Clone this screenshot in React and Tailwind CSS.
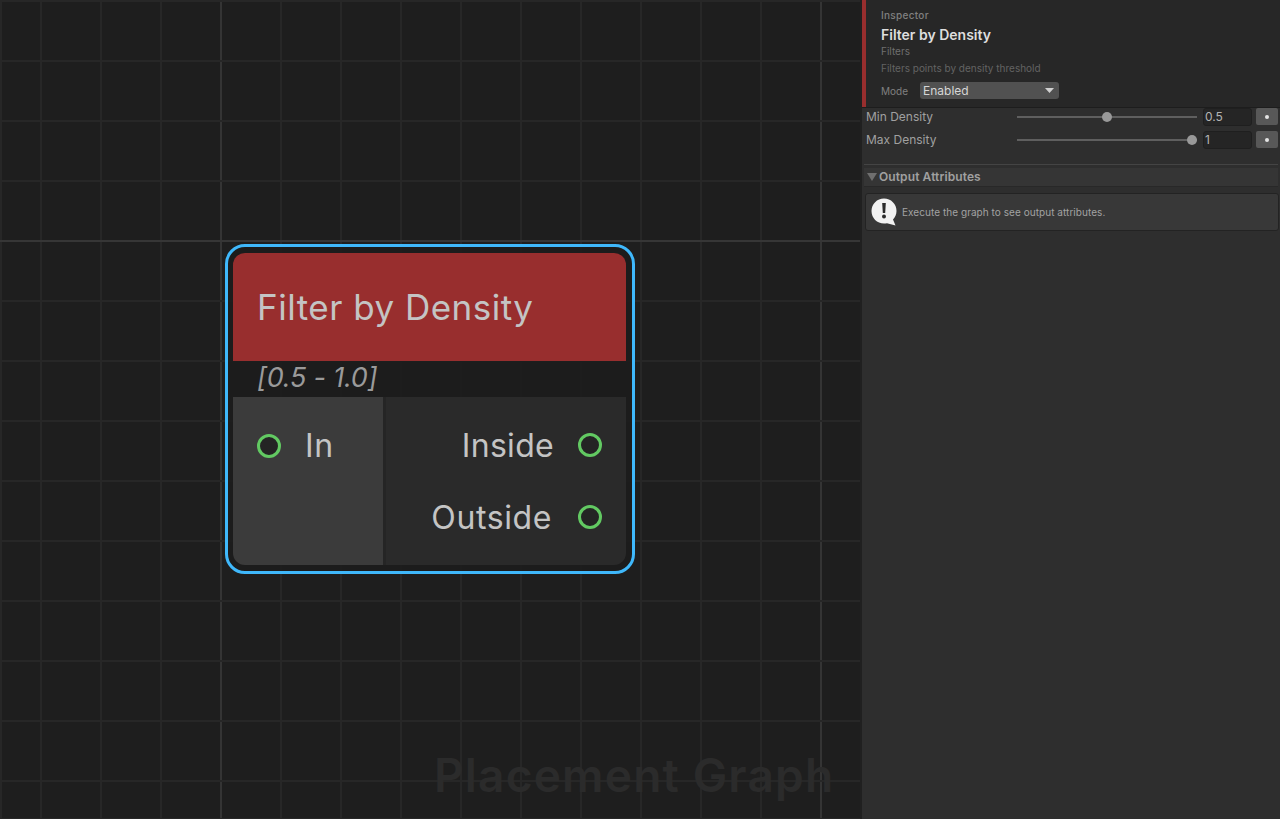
const INTER = "font-['Inter','Noto_Sans',sans-serif]";

function Grid() {
  const xs = [0, 40, 100, 160, 220, 280, 340, 400, 460, 520, 580, 640, 700, 760, 820];
  const ys = [0, 60, 120, 180, 240, 300, 360, 420, 480, 540, 600, 660, 720, 780, 818];
  return (
    <svg className="absolute inset-0" width="860" height="819">
      {xs.map((x) => (
        <line key={x} x1={x + 1} y1="0" x2={x + 1} y2="819" strokeWidth="2" stroke={x === 220 || x === 820 ? "#343434" : "#272727"} />
      ))}
      {ys.map((y) => (
        <line key={y} x1="0" y1={y + 1} x2="860" y2={y + 1} strokeWidth="2" stroke={y === 240 ? "#363636" : "#272727"} />
      ))}
    </svg>
  );
}

function Port() {
  return <div className="w-6 h-6 rounded-full border-[3px] border-[#62c962] bg-[#242424] shrink-0" />;
}

function GraphNode() {
  return (
    <div className="absolute left-[225px] top-[244px] w-[410px] h-[330px] rounded-[20px] border-[3px] border-[#3fb8fb] bg-[#1b1b1b]/80 pl-[5px] pr-[6px] py-[6px]">
      <div className="h-full rounded-[12px] overflow-hidden flex flex-col">
        <div className="h-[108px] bg-[#982e2e] flex items-center pl-[24px] text-[35px] text-[#c4c4c4] tracking-[0.5px]">
          Filter by Density
        </div>
        <div className="h-[36px] pl-[24px] pb-[2px] flex items-center italic text-[27px] tracking-[-0.2px] text-[#9a9a9a]">
          [0.5 - 1.0]
        </div>
        <div className="flex-1 flex text-[32px] tracking-[0.6px] text-[#c4c4c4]">
          <div className="w-[150px] bg-[#505050]/60 pt-[36px] pl-[24px]">
            <div className="flex items-center gap-[24px] h-[24px] pt-[1px]">
              <Port />
              <span>In</span>
            </div>
          </div>
          <div className="w-[3px] bg-[#2b2b2b]/60" />
          <div className="flex-1 bg-[#333333]/60 pt-[36px] pr-[24px] flex flex-col items-end gap-[48px]">
            <div className="flex items-center gap-[24px] h-[24px]">
              <span className="pt-[2px] tracking-[0.3px]">Inside</span>
              <Port />
            </div>
            <div className="flex items-center gap-[26px] h-[24px]">
              <span className="pt-[2px]">Outside</span>
              <Port />
            </div>
          </div>
        </div>
      </div>
    </div>
  );
}

function Slider({ percent, value }) {
  return (
    <div className="flex items-center h-[23px]">
      <div className="relative w-[180px] h-[2px] bg-[#5f5f5f] ml-[1px]">
        <div
          className="absolute top-[-4px] w-[10px] h-[10px] rounded-full bg-[#999999]"
          style={{ left: (percent * 170) / 100 + "px" }}
        />
      </div>
      <div className="ml-[6px] w-[49px] h-[18px] rounded-[3px] bg-[#252525] border border-[#1f1f1f] pl-[1px] text-[12px] leading-[16px] text-[#b4b4b4]">
        {value}
      </div>
      <div className="ml-[4px] w-[22px] h-[17px] rounded-[2px] bg-[#585858] flex items-center justify-center">
        <div className="w-[4px] h-[4px] rounded-full bg-[#e4e4e4]" />
      </div>
    </div>
  );
}

function Inspector() {
  return (
    <div className="w-[420px] h-full bg-[#2e2e2e] border-l-2 border-[#202020] flex flex-col">
      <div className="h-[107px] bg-[#272727] border-l-[4px] border-[#982e2e] pl-[15px] pt-[9px]">
        <div className="text-[10px] leading-[13px] font-medium text-[#808080] tracking-[0.3px]">Inspector</div>
        <div className="mt-[4px] text-[14px] leading-[17px] font-semibold text-[#dedede]">Filter by Density</div>
        <div className="mt-[2px] text-[10px] leading-[13px] text-[#6f6f6f]">Filters</div>
        <div className="mt-[4px] text-[10px] leading-[13px] text-[#636363]">Filters points by density threshold</div>
        <div className="mt-[7px] flex items-center">
          <span className="w-[39px] pt-[1px] text-[10px] text-[#808080]">Mode</span>
          <div className="w-[139px] h-[17px] rounded-[3px] bg-[#515151] flex items-center justify-between pl-[3px] pr-[5px] text-[12px] text-[#d6d6d6]">
            <span>Enabled</span>
            <svg width="9" height="5" viewBox="0 0 9 5">
              <path d="M0 0H9L4.5 5Z" fill="#d0d0d0" />
            </svg>
          </div>
        </div>
      </div>
      <div className="border-t border-[#1d1d1d]">
        <div className="-mt-[3px]">
          {[
            ["Min Density", 50, "0.5"],
            ["Max Density", 100, "1"],
          ].map(([label, percent, value]) => (
            <div key={label} className="flex items-center h-[23px] pl-[4px]">
              <span className="w-[150px] pt-[1px] text-[12px] text-[#a0a0a0]">{label}</span>
              <Slider percent={percent} value={value} />
            </div>
          ))}
        </div>
      </div>
      <div className="mt-[13px] mx-[2px] border-t border-[#444444]" />
      <div className="mt-[3px] mx-[2px] h-[19px] bg-[#353535] border-b border-[#282828] flex items-center pl-[3px] gap-[2px]">
        <svg width="10" height="8" viewBox="0 0 10 8">
          <path d="M0 0H10L5 8Z" fill="#6f6f6f" />
        </svg>
        <span className="text-[12px] font-semibold tracking-[0.1px] text-[#a0a0a0]">Output Attributes</span>
      </div>
      <div className="mt-[6px] ml-[3px] mr-[1px] h-[38px] rounded-[3px] bg-[#383838] border border-[#232323] flex items-center pl-[5px] gap-[5px]">
        <svg width="26" height="28" viewBox="0 0 26 28" className="shrink-0">
          <path d="M13 0.5C20 0.5 25.5 6 25.5 13C25.5 16.5 24 19.5 22 21.5L24.5 27.5L16 25.2C15 25.4 14 25.5 13 25.5C6 25.5 0.5 20 0.5 13C0.5 6 6 0.5 13 0.5Z" fill="#f2f2f2" />
          <path d="M11.2 5H14.8L14.2 15H11.8Z" fill="#2b2b2b" />
          <circle cx="13" cy="18.5" r="2" fill="#2b2b2b" />
        </svg>
        <span className="text-[10px] tracking-[0.05px] text-[#a2a2a2]">Execute the graph to see output attributes.</span>
      </div>
    </div>
  );
}

export default function App() {
  return (
    <div className={"w-[1280px] h-[819px] flex overflow-hidden " + INTER}>
      <div className="relative w-[860px] h-full bg-[#1e1e1e] overflow-hidden">
        <Grid />
        <div className="absolute left-[434px] top-[747px] text-[46px] leading-[56px] font-semibold text-[#2b2b2b] tracking-[1.2px]">
          Placement Graph
        </div>
        <GraphNode />
      </div>
      <Inspector />
    </div>
  );
}
